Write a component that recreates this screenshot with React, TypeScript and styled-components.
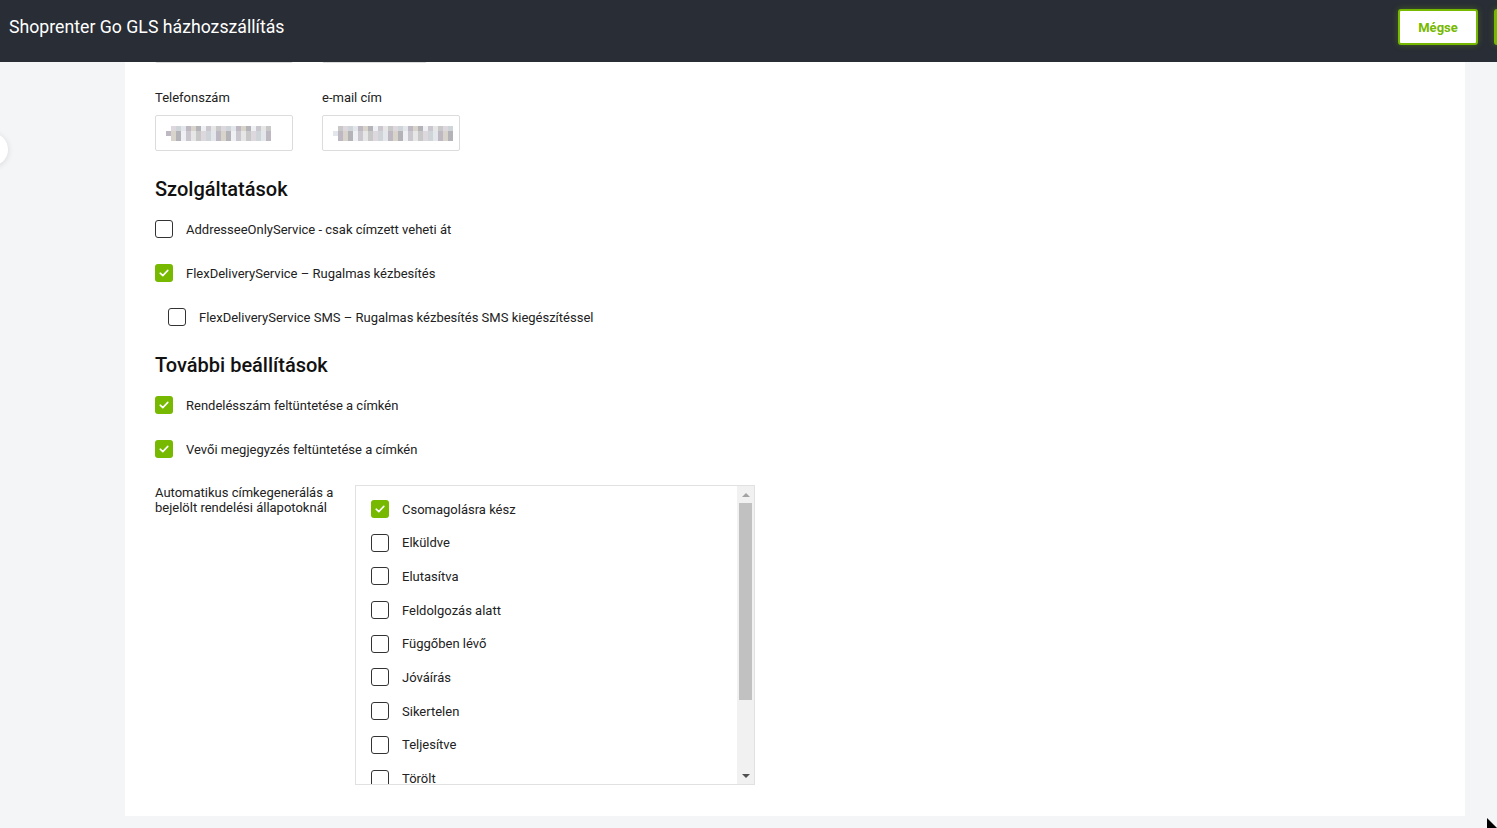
import React from "react";
import styled, { createGlobalStyle } from "styled-components";

const GlobalStyle = createGlobalStyle`
    html, body {
        margin: 0;
        padding: 0;
        background: #f4f5f7;
        font-family: Roboto, "Liberation Sans", Arial, sans-serif;
        color: #222;
    }
    * { box-sizing: border-box; }
`;

const green = "#76b900";

const Header = styled.header`
    position: fixed;
    top: 0;
    left: 0;
    right: 0;
    height: 62px;
    background: #292d35;
    display: flex;
    align-items: center;
    padding: 0 0 0 9px;
    overflow: hidden;
    z-index: 10;
`;

const Title = styled.h1`
    flex: 1;
    margin: 0 0 8px;
    font-size: 17.7px;
    font-weight: 400;
    color: #fff;
`;

const Actions = styled.div`
    display: flex;
    gap: 16px;
    margin-right: -77px;
    margin-bottom: 8px;
`;

const Button = styled.button<{ primary?: boolean }>`
    width: 80px;
    height: 36px;
    border-radius: 3px;
    border: 2px solid ${green};
    background: ${(p) => (p.primary ? green : "#fff")};
    color: ${(p) => (p.primary ? "#fff" : green)};
    font-family: inherit;
    font-size: 13px;
    font-weight: 700;
    box-shadow: 0 0 6px rgba(118, 185, 0, 0.35);
`;

const SideToggle = styled.div`
    position: fixed;
    left: -25px;
    top: 133px;
    width: 33px;
    height: 33px;
    border-radius: 50%;
    background: #fff;
    box-shadow: 0 1px 6px rgba(0, 0, 0, 0.12);
`;

const Cursor = styled.svg`
    position: fixed;
    left: 1487px;
    top: 818px;
`;

const Page = styled.main`
    min-height: 100vh;
    padding: 0 32px 13px 125px;
`;

const Card = styled.section`
    background: #fff;
    padding: 2px 30px 31px;
    display: flex;
    flex-direction: column;
`;

const FieldRow = styled.div<{ mt?: number }>`
    display: flex;
    gap: 29px;
    margin-top: ${(p) => p.mt ?? 0}px;
`;

const Field = styled.div`
    display: flex;
    flex-direction: column;
    gap: 10px;
`;

const Label = styled.label`
    font-size: 13px;
    line-height: 15px;
    color: #222;
`;

const Input = styled.div<{ w: number }>`
    width: ${(p) => p.w}px;
    height: 36px;
    border: 1px solid #dcdcdc;
    border-radius: 2px;
    display: flex;
    align-items: center;
    padding: 0 10px;
`;

const Mosaic = styled.div`
    display: grid;
    grid-auto-flow: column;
    grid-template-rows: repeat(3, 5px);
    grid-auto-columns: 5px;
`;

const Pixel = styled.span``;

const Heading = styled.h2<{ mt?: number }>`
    margin: ${(p) => p.mt ?? 26}px 0 19px;
    font-size: 20px;
    line-height: 24px;
    font-weight: 500;
    color: #111;
`;

const CheckList = styled.div`
    display: flex;
    flex-direction: column;
    gap: 26px;
`;

const CheckRow = styled.label<{ indent?: boolean }>`
    display: flex;
    align-items: center;
    gap: 13px;
    height: 18px;
    font-size: 13px;
    color: #222;
    padding-left: ${(p) => (p.indent ? 13 : 0)}px;
`;

const Box = styled.span<{ checked?: boolean }>`
    width: 18px;
    height: 18px;
    flex: none;
    border-radius: 3px;
    border: ${(p) => (p.checked ? "none" : "1.5px solid #333")};
    background: ${(p) => (p.checked ? green : "#fff")};
    display: flex;
    align-items: center;
    justify-content: center;
`;

const AutoRow = styled.div`
    display: flex;
    margin-top: 27px;
`;

const AutoLabel = styled.div`
    width: 200px;
    font-size: 13px;
    line-height: 15px;
    color: #222;
`;

const ListBox = styled.div`
    width: 400px;
    height: 300px;
    border: 1px solid #e1e1e1;
    display: flex;
`;

const ListInner = styled.div`
    flex: 1;
    overflow: hidden;
    padding: 14px 15px;
    display: flex;
    flex-direction: column;
    gap: 15.7px;
`;

const ScrollBar = styled.div`
    width: 17px;
    background: #f1f1f1;
    display: flex;
    flex-direction: column;
    align-items: center;
`;

const Arrow = styled.div<{ down?: boolean }>`
    height: 17px;
    display: flex;
    align-items: center;
    justify-content: center;
    &::after {
        content: "";
        border-left: 4px solid transparent;
        border-right: 4px solid transparent;
        ${(p) =>
            p.down
                ? "border-top: 4px solid #505050;"
                : "border-bottom: 4px solid #a3a3a3;"}
    }
`;

const Track = styled.div`
    flex: 1;
    width: 100%;
    padding: 0 2px;
`;

const Thumb = styled.div`
    height: 197px;
    background: #c1c1c1;
`;

function Check() {
    return (
        <svg width="10" height="8" viewBox="0 0 10 8">
            <polyline points="1.2,4.2 3.8,6.6 8.8,1.4" fill="none" stroke="#fff" strokeWidth="1.6" strokeLinecap="round" strokeLinejoin="round" />
        </svg>
    );
}

function CheckItem({ label, checked, indent }: { label: string; checked?: boolean; indent?: boolean }) {
    return (
        <CheckRow indent={indent}>
            <Box checked={checked}>{checked && <Check />}</Box>
            {label}
        </CheckRow>
    );
}

const palette = ["#e6e6e6", "#c8c8c8", "#dcd8de", "#cfd4d8", "#e3e6ea", "#bdb8c2", "#d8d3cb", "#b4b4b8", "#eef0f3", "#cbc7cf"];

function Blurred({ cols, seed }: { cols: number; seed: number }) {
    const cells = [];
    for (let i = 0; i < cols * 3; i++) {
        const row = i % 3;
        const idx = (i * 7 + seed * 3 + row * 5) % palette.length;
        const color = row === 1 ? palette[idx] : palette[(idx + 8) % palette.length];
        cells.push(<Pixel key={i} style={{ background: i < 3 && row !== 1 ? "#fff" : color }} />);
    }
    return <Mosaic>{cells}</Mosaic>;
}

const statuses = [
    { label: "Csomagolásra kész", checked: true },
    { label: "Elküldve" },
    { label: "Elutasítva" },
    { label: "Feldolgozás alatt" },
    { label: "Függőben lévő" },
    { label: "Jóváírás" },
    { label: "Sikertelen" },
    { label: "Teljesítve" },
    { label: "Törölt" },
    { label: "Visszaküldve" },
    { label: "Kiszállítás alatt" },
];

export default function App() {
    return (
        <>
            <GlobalStyle />
            <Header>
                <Title>Shoprenter Go GLS házhozszállítás</Title>
                <Actions>
                    <Button>Mégse</Button>
                    <Button primary>Mentés</Button>
                </Actions>
            </Header>
            <SideToggle />
            <Page>
                <Card>
                    <FieldRow>
                        <Field>
                            <Label>Irányítószám</Label>
                            <Input w={138} />
                        </Field>
                        <Field>
                            <Label>Város</Label>
                            <Input w={105} />
                        </Field>
                    </FieldRow>
                    <FieldRow mt={27}>
                        <Field>
                            <Label>Telefonszám</Label>
                            <Input w={138}>
                                <Blurred cols={21} seed={1} />
                            </Input>
                        </Field>
                        <Field>
                            <Label>e-mail cím</Label>
                            <Input w={138}>
                                <Blurred cols={24} seed={4} />
                            </Input>
                        </Field>
                    </FieldRow>

                    <Heading>Szolgáltatások</Heading>
                    <CheckList>
                        <CheckItem label="AddresseeOnlyService - csak címzett veheti át" />
                        <CheckItem label="FlexDeliveryService – Rugalmas kézbesítés" checked />
                        <CheckItem label="FlexDeliveryService SMS – Rugalmas kézbesítés SMS kiegészítéssel" indent />
                    </CheckList>

                    <Heading mt={27}>További beállítások</Heading>
                    <CheckList>
                        <CheckItem label="Rendelésszám feltüntetése a címkén" checked />
                        <CheckItem label="Vevői megjegyzés feltüntetése a címkén" checked />
                    </CheckList>

                    <AutoRow>
                        <AutoLabel>Automatikus címkegenerálás a bejelölt rendelési állapotoknál</AutoLabel>
                        <ListBox>
                            <ListInner>
                                {statuses.map((s) => (
                                    <CheckItem key={s.label} label={s.label} checked={s.checked} />
                                ))}
                            </ListInner>
                            <ScrollBar>
                                <Arrow />
                                <Track>
                                    <Thumb />
                                </Track>
                                <Arrow down />
                            </ScrollBar>
                        </ListBox>
                    </AutoRow>
                </Card>
            </Page>
            <Cursor width="10" height="10" viewBox="0 0 10 10">
                <polygon points="0,0 0,10 10,10" fill="#000" />
            </Cursor>
        </>
    );
}
